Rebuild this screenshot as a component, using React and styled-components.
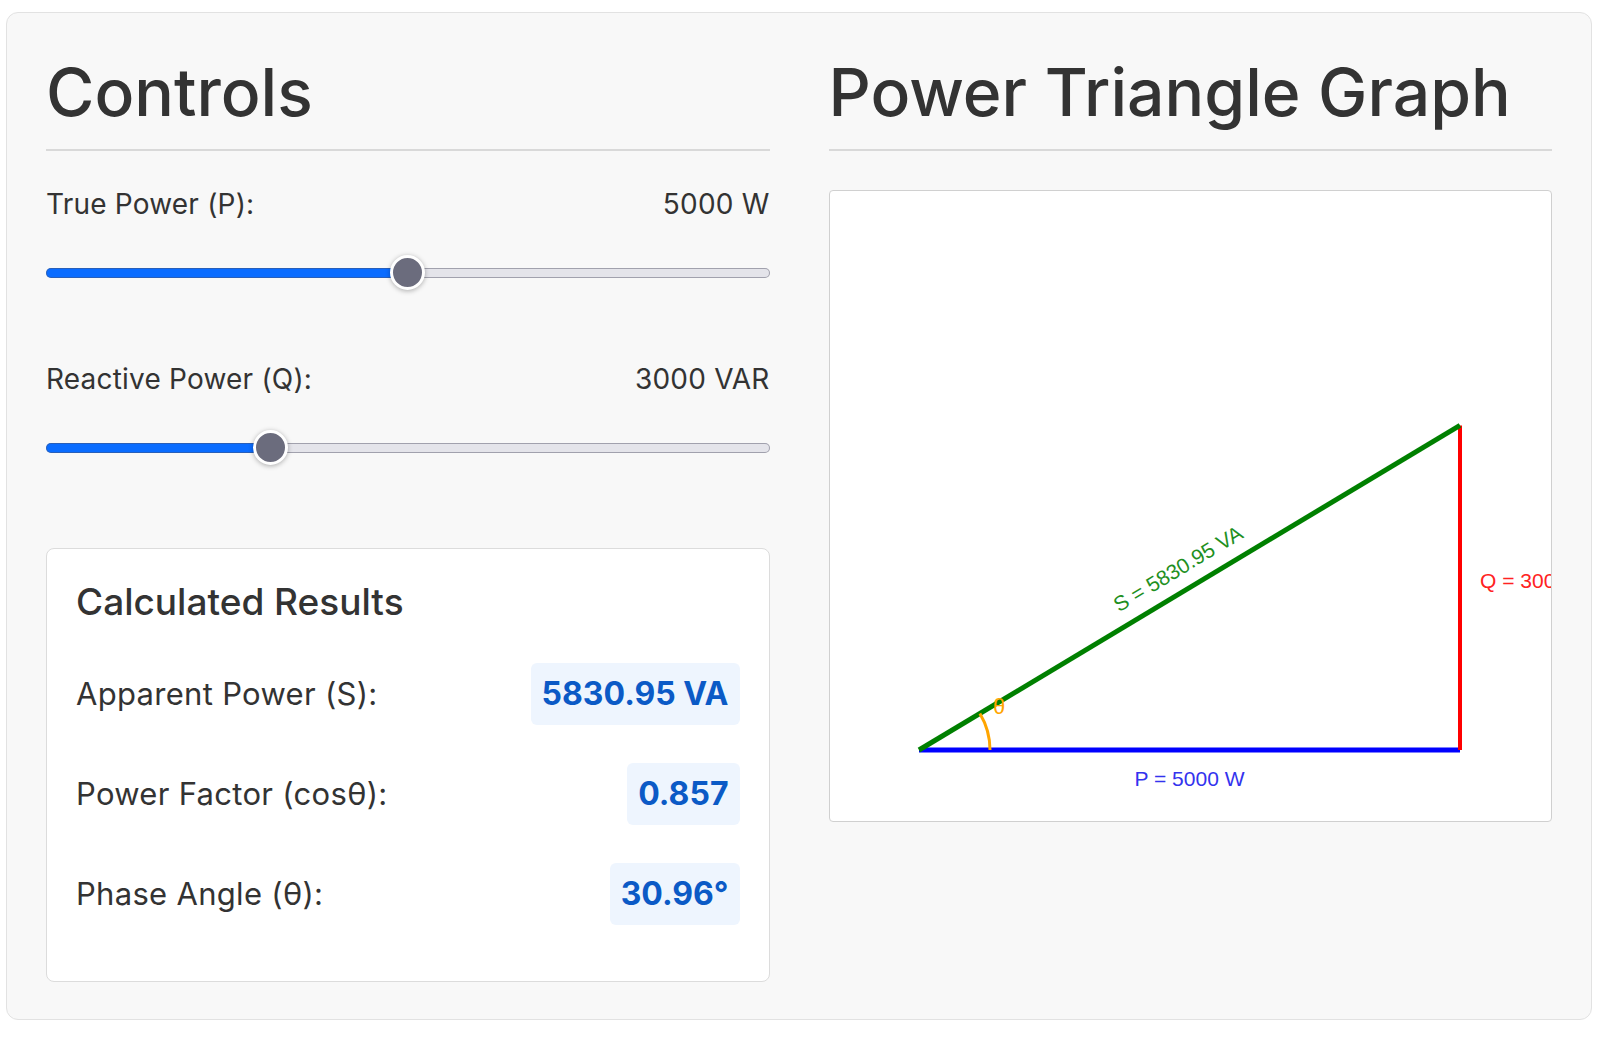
import React, { useState } from 'react';
import styled, { createGlobalStyle } from 'styled-components';

const GlobalStyle = createGlobalStyle`
  html, body {
    margin: 0;
    padding: 0;
    background: #ffffff;
  }
  body {
    font-family: Inter, "Noto Sans", "Liberation Sans", sans-serif;
    color: #333333;
  }
  * {
    box-sizing: border-box;
  }
`;

const MAX_P = 10000;
const MAX_Q = 10000;

const App = () => {
  const [p, setP] = useState(5000);
  const [q, setQ] = useState(3000);

  const s = Math.sqrt(p * p + q * q);
  const pf = s === 0 ? 0 : p / s;
  const angle = (Math.atan2(q, p) * 180) / Math.PI;

  return (
    <Page>
      <GlobalStyle />
      <Card>
        <Column>
          <Heading>Controls</Heading>
          <ControlGroup>
            <LabelRow>
              <span>True Power (P):</span>
              <span>{p} W</span>
            </LabelRow>
            <Slider
              type="range"
              min={0}
              max={MAX_P}
              step={100}
              value={p}
              onChange={(e) => setP(Number(e.target.value))}
              style={{ '--pct': `${(p / MAX_P) * 100}%` }}
            />
          </ControlGroup>
          <ControlGroup>
            <LabelRow>
              <span>Reactive Power (Q):</span>
              <span>{q} VAR</span>
            </LabelRow>
            <Slider
              type="range"
              min={0}
              max={MAX_Q}
              step={100}
              value={q}
              onChange={(e) => setQ(Number(e.target.value))}
              style={{ '--pct': `${(q / MAX_Q) * 100}%` }}
            />
          </ControlGroup>
          <Results>
            <ResultsTitle>Calculated Results</ResultsTitle>
            <ResultRow>
              <ResultLabel>Apparent Power (S):</ResultLabel>
              <ResultValue>{s.toFixed(2)} VA</ResultValue>
            </ResultRow>
            <ResultRow>
              <ResultLabel>Power Factor (cosθ):</ResultLabel>
              <ResultValue>{pf.toFixed(3)}</ResultValue>
            </ResultRow>
            <ResultRow>
              <ResultLabel>Phase Angle (θ):</ResultLabel>
              <ResultValue>{angle.toFixed(2)}°</ResultValue>
            </ResultRow>
          </Results>
        </Column>
        <Column>
          <Heading>Power Triangle Graph</Heading>
          <GraphBox>
            <TriangleGraph p={p} q={q} s={s} angle={angle} />
          </GraphBox>
        </Column>
      </Card>
    </Page>
  );
};

// graph: origin bottom-left, scaled so P=5000 spans 541px
const TriangleGraph = ({ p, q, s, angle }) => {
  const scale = 541 / 5000;
  const ox = 89;
  const oy = 559;
  const px = ox + p * scale;
  const qy = oy - q * scale;
  const rad = (angle * Math.PI) / 180;
  const r = 71;
  const arcX = ox + r * Math.cos(rad);
  const arcY = oy - r * Math.sin(rad);
  const midX = (ox + px) / 2;
  const midY = (oy + qy) / 2;

  return (
    <svg width="722" height="630" viewBox="0 0 722 630">
      <line x1={ox} y1={oy} x2={px} y2={oy} stroke="#0000ff" strokeWidth="5" />
      <line x1={px} y1={oy} x2={px} y2={qy} stroke="#ff0000" strokeWidth="4" />
      <line x1={ox} y1={oy} x2={px} y2={qy} stroke="#008000" strokeWidth="5" />
      <path
        d={`M ${ox + r} ${oy} A ${r} ${r} 0 0 0 ${arcX} ${arcY}`}
        fill="none"
        stroke="#ffa500"
        strokeWidth="3"
      />
      <GraphText x={ox + 74} y={oy - 36} fill="#ffa500" fontSize="22">θ</GraphText>
      <GraphText x={midX} y={oy + 36} fill="#3333ee" fontSize="21" textAnchor="middle">
        P = {p} W
      </GraphText>
      <GraphText x={px + 20} y={midY} fill="#ff2222" fontSize="21">
        Q = {q} VAR
      </GraphText>
      <GraphText
        transform={`translate(${midX} ${midY}) rotate(${-angle})`}
        y={-15}
        fill="#1f901f"
        fontSize="21"
        textAnchor="middle"
      >
        S = {s.toFixed(2)} VA
      </GraphText>
    </svg>
  );
};

const Page = styled.div`
  padding: 12px 8px 20px 6px;
`;

const Card = styled.div`
  display: grid;
  grid-template-columns: 1fr 1fr;
  column-gap: 59px;
  background: #f8f8f8;
  border: 1px solid #e2e2e2;
  border-radius: 12px;
  padding: 37px 39px;
`;

const Column = styled.div`
  display: flex;
  flex-direction: column;
  min-width: 0;
`;

const Heading = styled.h2`
  margin: 0;
  padding-bottom: 15px;
  font-size: 66px;
  line-height: 84px;
  font-weight: 500;
  color: #333333;
  border-bottom: 2px solid #d9d9d9;
`;

const ControlGroup = styled.div`
  margin-top: 36px;
  & + & {
    margin-top: 72px;
  }
`;

const LabelRow = styled.div`
  display: flex;
  justify-content: space-between;
  align-items: center;
  font-size: 28px;
  line-height: 34px;
  letter-spacing: 0.2px;
  color: #333333;
`;

const Slider = styled.input`
  -webkit-appearance: none;
  appearance: none;
  display: block;
  width: 100%;
  height: 35px;
  margin: 34px 0 0;
  padding: 0;
  background: transparent;
  outline: none;

  &::-webkit-slider-runnable-track {
    height: 10px;
    border-radius: 5px;
    background: linear-gradient(
      to right,
      #0a6cff 0,
      #0a6cff var(--pct),
      #e4e4ea var(--pct),
      #e4e4ea 100%
    );
    box-shadow: inset 0 0 0 1px rgba(80, 80, 100, 0.45);
  }

  &::-webkit-slider-thumb {
    -webkit-appearance: none;
    appearance: none;
    width: 35px;
    height: 35px;
    margin-top: -12.5px;
    border-radius: 50%;
    background: #6b6c7d;
    border: 3px solid #ffffff;
    box-shadow: 0 1px 5px rgba(0, 0, 0, 0.3);
  }
`;

const Results = styled.div`
  margin-top: 83px;
  background: #ffffff;
  border: 1px solid #dcdcdc;
  border-radius: 8px;
  padding: 31px 29px 56px;
`;

const ResultsTitle = styled.h3`
  margin: 0 0 39px;
  font-size: 37px;
  line-height: 44px;
  font-weight: 500;
  color: #333333;
`;

const ResultRow = styled.div`
  display: flex;
  justify-content: space-between;
  align-items: center;
  & + & {
    margin-top: 38px;
  }
`;

const ResultLabel = styled.span`
  font-size: 31px;
  line-height: 36px;
  letter-spacing: 0.3px;
  color: #333333;
`;

const ResultValue = styled.span`
  height: 62px;
  line-height: 62px;
  padding: 0 11px;
  border-radius: 6px;
  background: #eef5fe;
  color: #0b5ac6;
  font-size: 32px;
  font-weight: 700;
`;

const GraphBox = styled.div`
  margin-top: 39px;
  height: 632px;
  background: #ffffff;
  border: 1px solid #d0d0d0;
  border-radius: 4px;
  overflow: hidden;
`;

const GraphText = styled.text`
  font-family: "Liberation Sans", Arial, sans-serif;
`;

export default App;
